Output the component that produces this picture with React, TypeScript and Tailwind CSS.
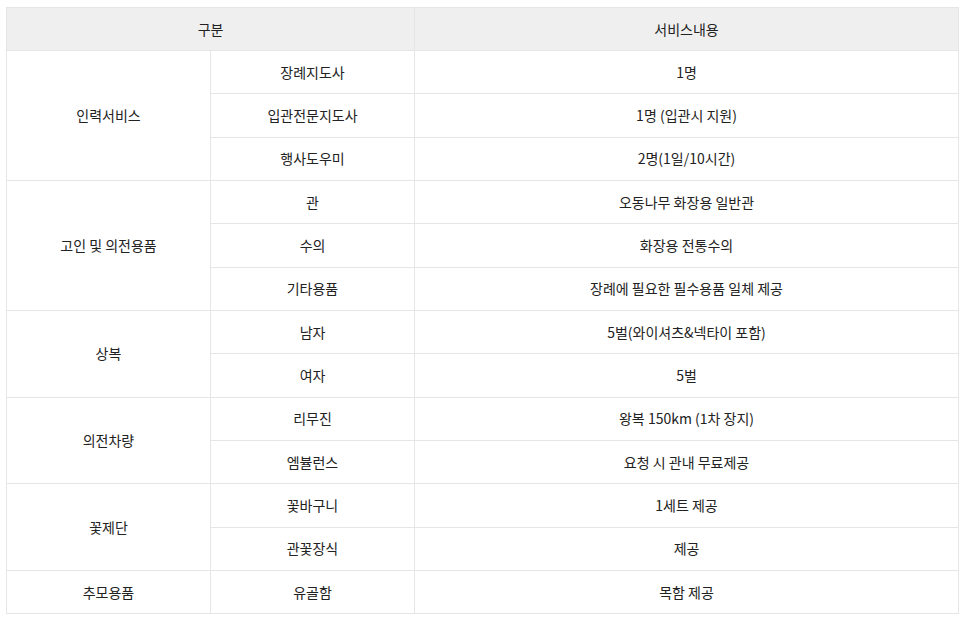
const rows: { group: string; span: number; items: [string, string][] }[] = [
  {
    group: "인력서비스",
    span: 3,
    items: [
      ["장례지도사", "1명"],
      ["입관전문지도사", "1명 (입관시 지원)"],
      ["행사도우미", "2명(1일/10시간)"],
    ],
  },
  {
    group: "고인 및 의전용품",
    span: 3,
    items: [
      ["관", "오동나무 화장용 일반관"],
      ["수의", "화장용 전통수의"],
      ["기타용품", "장례에 필요한 필수용품 일체 제공"],
    ],
  },
  {
    group: "상복",
    span: 2,
    items: [
      ["남자", "5벌(와이셔츠&넥타이 포함)"],
      ["여자", "5벌"],
    ],
  },
  {
    group: "의전차량",
    span: 2,
    items: [
      ["리무진", "왕복 150km (1차 장지)"],
      ["엠뷸런스", "요청 시 관내 무료제공"],
    ],
  },
  {
    group: "꽃제단",
    span: 2,
    items: [
      ["꽃바구니", "1세트 제공"],
      ["관꽃장식", "제공"],
    ],
  },
  {
    group: "추모용품",
    span: 1,
    items: [["유골함", "목함 제공"]],
  },
];

const cell = "border border-[#e6e6e6] text-center align-middle p-0";

export default function App() {
  return (
    <div
      className="bg-white px-[6px] pt-[7px] text-[14px] text-[#222]"
      style={{ fontFamily: '"Noto Sans CJK KR", "Noto Sans", sans-serif' }}
    >
      <table className="w-[953px] table-fixed border-collapse">
        <colgroup>
          <col className="w-[204px]" />
          <col className="w-[204px]" />
          <col />
        </colgroup>
        <thead>
          <tr className="h-[43px] bg-[#efefef]">
            <th colSpan={2} className={`${cell} font-normal`}>
              구분
            </th>
            <th className={`${cell} font-normal`}>서비스내용</th>
          </tr>
        </thead>
        <tbody>
          {rows.map((g) =>
            g.items.map(([name, desc], i) => (
              <tr key={g.group + name} className="h-[43.33px]">
                {i === 0 && (
                  <td rowSpan={g.span} className={cell}>
                    {g.group}
                  </td>
                )}
                <td className={cell}>{name}</td>
                <td className={cell}>{desc}</td>
              </tr>
            )),
          )}
        </tbody>
      </table>
    </div>
  );
}
